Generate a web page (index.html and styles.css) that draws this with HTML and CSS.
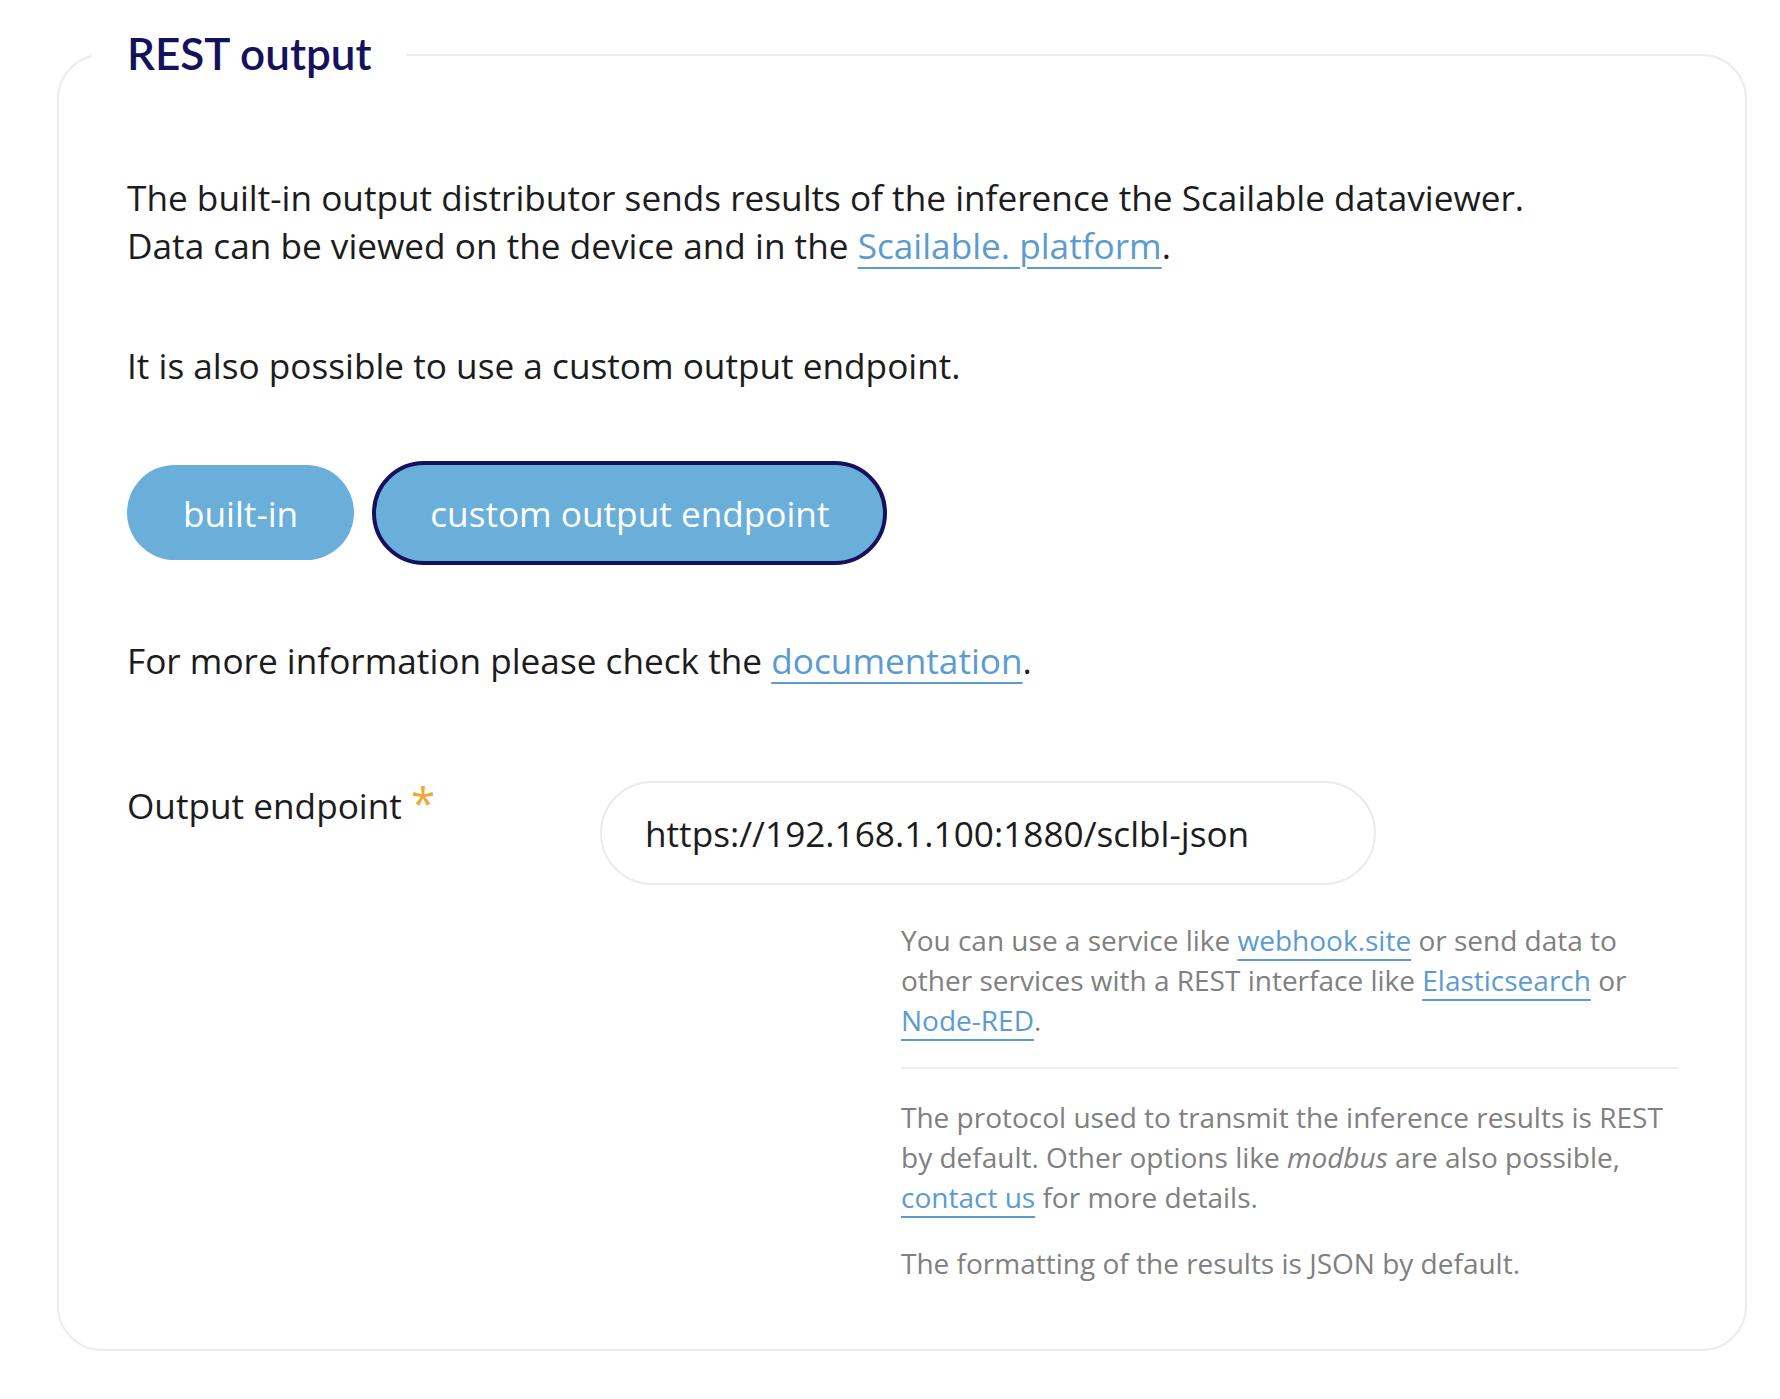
FILE: index.html
```html
<!DOCTYPE html>
<html lang="en">
<head>
<meta charset="utf-8">
<title>REST output</title>
<link rel="stylesheet" href="styles.css">
</head>
<body>
<fieldset class="panel">
  <legend class="panel-title">REST output</legend>
  <div class="panel-body">
    <p class="lead">The built-in output distributor sends results of the inference the Scailable dataviewer.<br>Data can be viewed on the device and in the <a href="#">Scailable. platform</a>.</p>
    <p class="lead">It is also possible to use a custom output endpoint.</p>
    <div class="toggle">
      <button type="button" class="pill">built-in</button>
      <button type="button" class="pill pill-active">custom output endpoint</button>
    </div>
    <p class="lead lead-last">For more information please check the <a href="#">documentation</a>.</p>
    <div class="field">
      <label class="field-label" for="endpoint">Output endpoint <span class="req">*</span></label>
      <input class="field-input" id="endpoint" type="text" value="https://192.168.1.100:1880/sclbl-json">
    </div>
    <div class="help">
      <p>You can use a service like <a href="#">webhook.site</a> or send data to other services with a REST interface like <a href="#">Elasticsearch</a> or <a href="#">Node-RED</a>.</p>
      <hr>
      <p>The protocol used to transmit the inference results is REST by default. Other options like <em>modbus</em> are also possible, <a href="#">contact us</a> for more details.</p>
      <p>The formatting of the results is JSON by default.</p>
    </div>
  </div>
</fieldset>
</body>
</html>
```

FILE: styles.css
```css
body {
  margin: 0;
  background: #ffffff;
  font-family: "Open Sans", "Liberation Sans", sans-serif;
  color: #1c1c1c;
}

.panel {
  margin: 27px 33px 0 57px;
  padding: 0 33px 66px 33px;
  border: 2px solid #ececec;
  border-radius: 45px;
  min-width: 0;
}

.panel-title {
  padding: 0 35px 4px;
  font-family: "Lato", "Open Sans", sans-serif;
  font-weight: 600;
  font-size: 44px;
  line-height: 1.2;
  color: #14125c;
}

.panel-body {
  padding: 89px 34px 0 35px;
}

.lead {
  margin: 0 0 72px;
  font-size: 35.2px;
  line-height: 48px;
}

.lead-last {
  margin-bottom: 97px;
}

a {
  color: #5b9bd1;
  text-decoration: underline;
  text-decoration-thickness: 2px;
  text-underline-offset: 8px;
}

.toggle {
  display: flex;
  align-items: center;
  gap: 18px;
  margin-bottom: 71px;
}

.pill {
  box-sizing: border-box;
  height: 95px;
  padding: 0 56px;
  border: 0;
  border-radius: 999px;
  background: #6aafda;
  color: #ffffff;
  font-family: "Open Sans", sans-serif;
  font-size: 35.2px;
}

.pill-active {
  height: 104px;
  padding: 0 54px;
  border: 4px solid #14125c;
}

.field {
  display: grid;
  grid-template-columns: 473px 776px;
  align-items: start;
}

.field-label {
  font-size: 35.2px;
  line-height: 48px;
}

.req {
  color: #f0a830;
  font-size: 44px;
  line-height: 0;
}

.field-input {
  box-sizing: border-box;
  width: 776px;
  height: 104px;
  padding: 0 43px;
  border: 2px solid #ebebeb;
  border-radius: 999px;
  font-family: "Open Sans", sans-serif;
  font-size: 35.2px;
  color: #1c1c1c;
  outline: none;
}

.help {
  width: 777px;
  margin: 35px 0 0 auto;
  font-size: 28px;
  line-height: 40px;
  color: #808080;
}

.help p {
  margin: 0;
}

.help p + p {
  margin-top: 26px;
}

.help hr {
  margin: 27px 0 28px;
  border: 0;
  border-top: 2px solid #eeeeee;
}
```
